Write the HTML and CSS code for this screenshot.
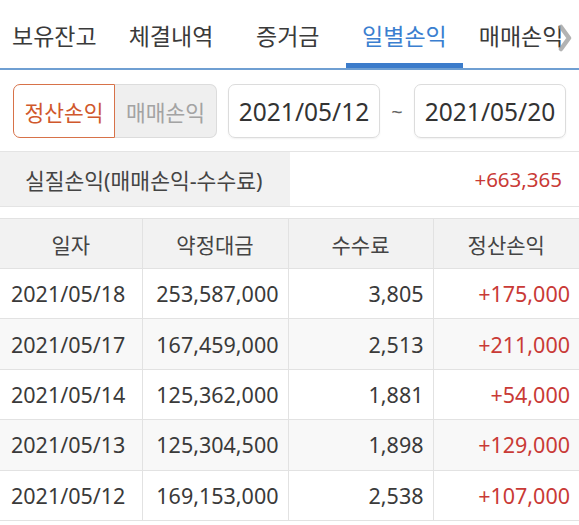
FILE: index.html
```html
<!DOCTYPE html>
<html lang="ko">
<head>
<meta charset="utf-8">
<link rel="stylesheet" href="styles.css">
</head>
<body>
<nav class="tabs">
  <div class="tab-strip">
    <span class="tab">보유잔고</span>
    <span class="tab">체결내역</span>
    <span class="tab">증거금</span>
    <span class="tab active">일별손익</span>
    <span class="tab">매매손익</span>
  </div>
  <svg class="more" width="14" height="28" viewBox="0 0 14 28"><path d="M3 3 L11 14 L3 25" fill="none" stroke="#9a9a9a" stroke-width="4.5" stroke-linecap="round" stroke-linejoin="round" opacity="0.75"/></svg>
</nav>

<section class="controls">
  <div class="segment">
    <span class="seg on">정산손익</span>
    <span class="seg off">매매손익</span>
  </div>
  <span class="date">2021/05/12</span>
  <span class="tilde">~</span>
  <span class="date">2021/05/20</span>
</section>

<section class="summary">
  <div class="sum-label">실질손익(매매손익-수수료)</div>
  <div class="sum-value">+663,365</div>
</section>

<table class="grid">
  <thead>
    <tr><th>일자</th><th>약정대금</th><th>수수료</th><th>정산손익</th></tr>
  </thead>
  <tbody>
    <tr><td class="d">2021/05/18</td><td>253,587,000</td><td>3,805</td><td class="p">+175,000</td></tr>
    <tr class="alt"><td class="d">2021/05/17</td><td>167,459,000</td><td>2,513</td><td class="p">+211,000</td></tr>
    <tr><td class="d">2021/05/14</td><td>125,362,000</td><td>1,881</td><td class="p">+54,000</td></tr>
    <tr class="alt"><td class="d">2021/05/13</td><td>125,304,500</td><td>1,898</td><td class="p">+129,000</td></tr>
    <tr><td class="d">2021/05/12</td><td>169,153,000</td><td>2,538</td><td class="p">+107,000</td></tr>
  </tbody>
</table>
</body>
</html>
```

FILE: styles.css
```css
html, body {
  margin: 0;
  padding: 0;
  background: #fff;
  width: 579px;
  height: 525px;
  overflow: hidden;
  font-family: "Noto Sans", "Noto Sans CJK KR", sans-serif;
  color: #383838;
}

.tabs {
  position: relative;
  height: 68px;
  border-bottom: 2px solid #6f9fd2;
  overflow: hidden;
}
.tab-strip {
  display: flex;
  margin-left: -4px;
  height: 68px;
}
.tab {
  flex: 0 0 116.7px;
  text-align: center;
  font-size: 23px;
  line-height: 72px;
  height: 68px;
  box-sizing: border-box;
  color: #3a3a3a;
  white-space: nowrap;
}
.tab.active {
  color: #3b7fd0;
  border-bottom: 5px solid #3c7ccb;
}
.more {
  position: absolute;
  right: 7px;
  top: 24px;
}

.controls {
  display: flex;
  align-items: center;
  padding: 14px 0 0 13px;
  height: 54px;
}
.segment {
  display: flex;
  height: 54px;
}
.seg {
  width: 102px;
  box-sizing: border-box;
  display: flex;
  align-items: center;
  justify-content: center;
  font-size: 21.5px;
}
.seg.on {
  border: 1.5px solid #d77249;
  border-radius: 7px 0 0 7px;
  color: #d0582c;
  background: #fff;
}
.seg.off {
  border: 1px solid #dcdcdc;
  border-left: none;
  border-radius: 0 7px 7px 0;
  background: #efefef;
  color: #a3a3a3;
}
.date {
  margin-left: 11px;
  width: 152px;
  height: 54px;
  box-sizing: border-box;
  border: 1px solid #dcdcdc;
  border-radius: 7px;
  display: flex;
  align-items: center;
  justify-content: center;
  font-size: 24.5px;
  color: #333;
  box-shadow: 0 1px 2px rgba(0,0,0,0.06);
  white-space: nowrap;
}
.tilde {
  margin-left: 11px;
  width: 12px;
  font-size: 20px;
  color: #666;
  text-align: center;
}

.summary {
  display: flex;
  margin-top: 13px;
  height: 54px;
  border-top: 1px solid #e4e4e4;
  border-bottom: 1px solid #e4e4e4;
}
.sum-label {
  width: 290px;
  background: #f1f1f1;
  display: flex;
  align-items: center;
  padding-left: 25px;
  box-sizing: border-box;
  font-size: 21.5px;
  color: #444;
  white-space: nowrap;
}
.sum-value {
  flex: 1;
  display: flex;
  align-items: center;
  justify-content: flex-end;
  padding-right: 17px;
  font-size: 20.5px;
  color: #c93a36;
}

.grid {
  margin-top: 11px;
  width: 579px;
  border-collapse: collapse;
  table-layout: fixed;
  font-size: 21.5px;
}
.grid th, .grid td {
  border: 1px solid #e2e2e2;
  height: 50.4px;
  padding: 0 9px;
  box-sizing: border-box;
  white-space: nowrap;
}
.grid th:first-child, .grid td:first-child { border-left: none; }
.grid th:last-child, .grid td:last-child { border-right: none; }
.grid th:nth-child(1) { width: 142px; }
.grid th:nth-child(2) { width: 146px; }
.grid th:nth-child(3) { width: 145px; }
.grid th {
  background: #f2f2f2;
  font-weight: normal;
  color: #444;
  font-size: 21px;
  height: 50px;
}
.grid td {
  text-align: right;
  color: #3a3a3a;
}
.grid td.d {
  text-align: left;
  padding-left: 11px;
}
.grid td.p {
  color: #c93a36;
}
.grid tr.alt td {
  background: #f8f8f8;
}
```
